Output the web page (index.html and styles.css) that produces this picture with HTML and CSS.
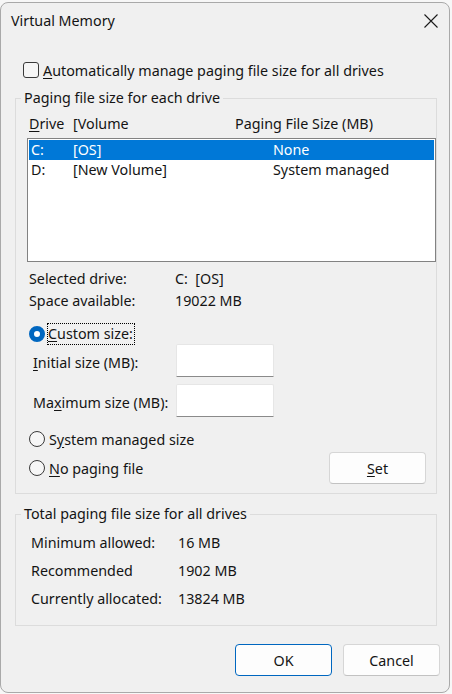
FILE: index.html
```html
<!DOCTYPE html>
<html>
<head>
<meta charset="utf-8">
<link rel="stylesheet" href="styles.css">
</head>
<body>
<div class="window">
  <div class="titlebar">
    <span class="title">Virtual Memory</span>
    <svg class="close" width="14" height="14" viewBox="0 0 14 14"><path d="M0.5 0.5 L13.5 13.5 M13.5 0.5 L0.5 13.5" stroke="#1a1a1a" stroke-width="1.1" fill="none"/></svg>
  </div>
  <div class="auto-row">
    <span class="checkbox"></span>
    <span><u>A</u>utomatically manage paging file size for all drives</span>
  </div>
  <fieldset class="group group1">
    <legend>Paging file size for each drive</legend>
    <div class="list-head">
      <span class="c-drive"><u>D</u>rive</span>
      <span class="c-vol">[Volume</span>
      <span>Paging File Size (MB)</span>
    </div>
    <div class="listbox">
      <div class="lrow selected">
        <span class="l-drive">C:</span>
        <span class="l-vol">[OS]</span>
        <span>None</span>
      </div>
      <div class="lrow">
        <span class="l-drive">D:</span>
        <span class="l-vol">[New Volume]</span>
        <span>System managed</span>
      </div>
    </div>
    <div class="info-row first"><span class="info-label">Selected drive:</span><span>C:&nbsp; [OS]</span></div>
    <div class="info-row"><span class="info-label">Space available:</span><span>19022 MB</span></div>
    <div class="radio-row custom">
      <span class="radio checked"></span>
      <span class="focus"><u>C</u>ustom size:</span>
    </div>
    <div class="field-row first">
      <span class="field-label"><u>I</u>nitial size (MB):</span>
      <span class="input"></span>
    </div>
    <div class="field-row">
      <span class="field-label">Ma<u>x</u>imum size (MB):</span>
      <span class="input"></span>
    </div>
    <div class="radio-row sys">
      <span class="radio"></span>
      <span>S<u>y</u>stem managed size</span>
    </div>
    <div class="nopage-row">
      <div class="radio-inline">
        <span class="radio"></span>
        <span><u>N</u>o paging file</span>
      </div>
      <span class="btn set-btn"><u>S</u>et</span>
    </div>
  </fieldset>
  <fieldset class="group group2">
    <legend>Total paging file size for all drives</legend>
    <div class="tot-row first"><span class="tot-label">Minimum allowed:</span><span>16 MB</span></div>
    <div class="tot-row"><span class="tot-label">Recommended</span><span>1902 MB</span></div>
    <div class="tot-row"><span class="tot-label">Currently allocated:</span><span>13824 MB</span></div>
  </fieldset>
  <div class="buttons">
    <span class="btn ok">OK</span>
    <span class="btn">Cancel</span>
  </div>
</div>
</body>
</html>
```
FILE: styles.css
```css
html, body {
  margin: 0;
  padding: 0;
  background: #f7f7f7;
}
body {
  font-family: "Noto Sans", "Open Sans", sans-serif;
  font-size: 14.3px;
  color: #141414;
  width: 452px;
  height: 694px;
  overflow: hidden;
}
u { text-decoration: underline; text-underline-offset: 2px; }
.window {
  box-sizing: border-box;
  margin-top: 2px;
  width: 450px;
  height: 691px;
  background: #f0f0f0;
  border: 1px solid #a9a9a9;
  border-radius: 8px;
}
.titlebar {
  height: 35px;
  display: flex;
  align-items: center;
  justify-content: space-between;
  padding: 0 11px 0 10px;
}
.close { display: block; }
.auto-row {
  margin-top: 22px;
  height: 20px;
  display: flex;
  align-items: center;
  padding-left: 22px;
  gap: 4px;
}
.checkbox {
  box-sizing: border-box;
  width: 16px;
  height: 16px;
  border: 1px solid #3a3a3a;
  border-radius: 3px;
  background: #f6f6f6;
}
.group {
  box-sizing: border-box;
  margin: 0 0 0 14px;
  width: 422px;
  padding: 0;
  border: 1px solid #dcdcdc;
  min-width: 0;
}
.group legend {
  padding: 0 3px;
  margin-left: 5px;
  line-height: 20px;
  height: 20px;
}
.group1 { margin-top: 8px; padding-bottom: 9px; }
.list-head {
  margin-top: 6px;
  height: 20px;
  line-height: 20px;
  display: flex;
  padding-left: 13px;
}
.c-drive { width: 44px; }
.c-vol { width: 162px; }
.listbox {
  box-sizing: border-box;
  margin: 4px 0 0 11px;
  width: 409px;
  height: 124px;
  background: #fff;
  border: 1px solid #828282;
  padding: 1px;
}
.lrow {
  height: 20px;
  line-height: 20px;
  display: flex;
  padding-left: 2px;
}
.lrow.selected { background: #0078d7; color: #fff; }
.l-drive { width: 42px; }
.l-vol { width: 200px; }
.info-row {
  height: 22px;
  line-height: 22px;
  display: flex;
  padding-left: 13px;
}
.info-row.first { margin-top: 6px; }
.info-label { width: 146px; }
.radio-row {
  height: 24px;
  display: flex;
  align-items: center;
  padding-left: 13px;
  gap: 4px;
}
.radio-row.custom { margin-top: 10px; }
.radio-row.sys { margin-top: 10px; }
.radio {
  box-sizing: border-box;
  width: 16px;
  height: 16px;
  border-radius: 50%;
  border: 1px solid #3a3a3a;
  background: #f6f6f6;
  flex: none;
}
.radio.checked {
  border: 5px solid #0067c0;
  background: #fff;
}
.focus {
  outline: 1px dotted #000;
  line-height: 20px;
  padding: 0 1px 0 0;
  margin-left: -1px;
}
.field-row {
  height: 33px;
  display: flex;
  align-items: center;
  padding-left: 17px;
}
.field-row.first { margin-top: -2px; }
.field-row + .field-row { margin-top: 7px; }
.field-label { width: 143px; padding-top: 3px; }
.input {
  box-sizing: border-box;
  width: 98px;
  height: 33px;
  background: #fff;
  border: 1px solid #e6e6e6;
  border-bottom: 1px solid #8a8a8a;
  border-radius: 2px 2px 0 0;
}
.nopage-row {
  margin-top: 1px;
  height: 32px;
  display: flex;
  align-items: center;
  justify-content: space-between;
  padding: 0 10px 0 13px;
}
.radio-inline { display: flex; align-items: center; gap: 4px; }
.btn {
  box-sizing: border-box;
  width: 97px;
  height: 32px;
  display: flex;
  align-items: center;
  justify-content: center;
  background: #fdfdfd;
  border: 1px solid #d6d6d6;
  border-bottom-color: #c2c2c2;
  border-radius: 4px;
}
.group2 { margin-top: 10px; padding-bottom: 12px; }
.tot-row {
  height: 28px;
  line-height: 28px;
  display: flex;
  padding-left: 15px;
}
.tot-row.first { margin-top: 5px; }
.tot-label { width: 147px; }
.buttons {
  margin-top: 18px;
  display: flex;
  justify-content: flex-end;
  gap: 11px;
  padding-right: 9px;
}
.btn.ok { border: 1px solid #0067c0; }
```
